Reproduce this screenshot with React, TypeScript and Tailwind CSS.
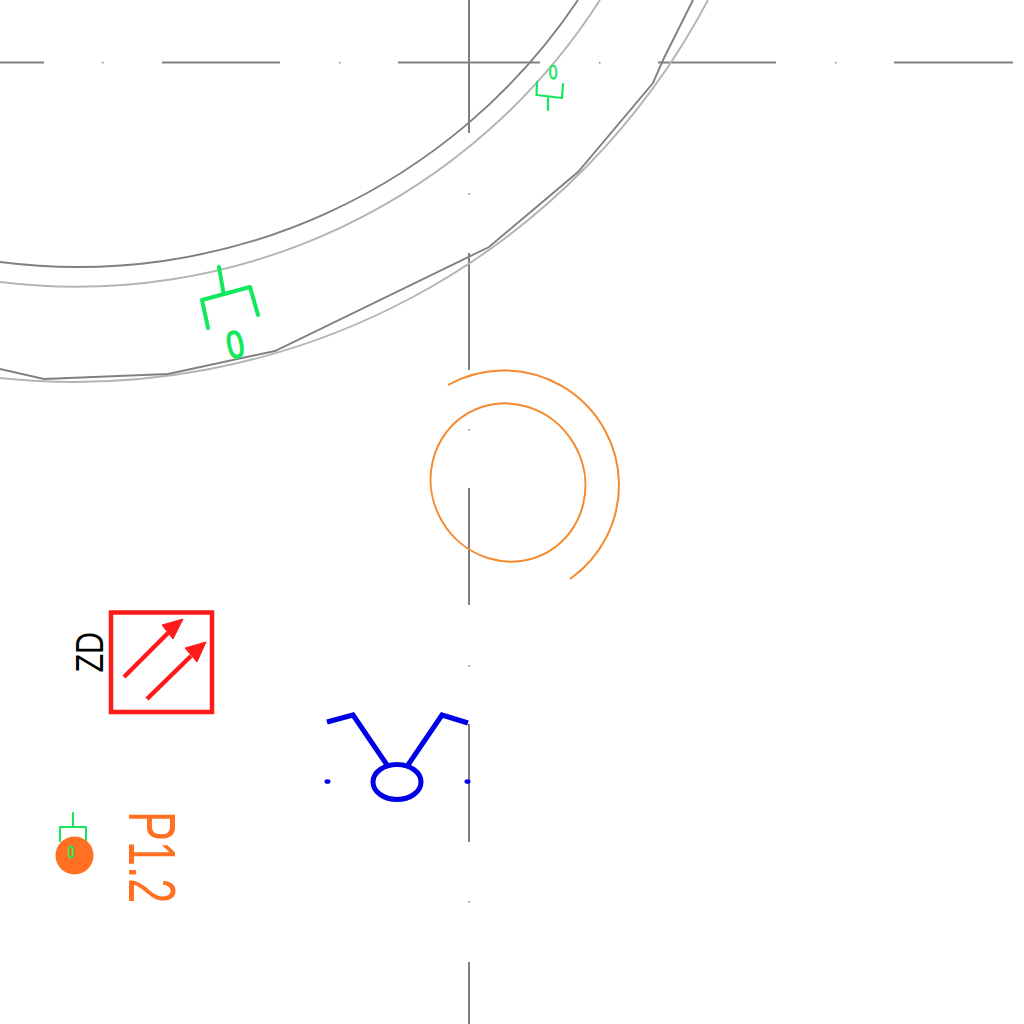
const DARK = "#808080";
const LIGHT = "#b4b4b4";
const GREEN = "#12e85c";
const ORANGE = "#ff7022";
const BLUE = "#0000e6";
const RED = "#ff1a1a";

// centre lines: [from, to] stretches, plus the tiny dots between them
const hSegments = [[0, 44], [162, 280], [398, 540], [658, 776], [894, 1013]];
const hDots = [102, 339, 599, 835];
const vSegments = [[0, 133], [253, 370], [488, 605], [724, 842], [962, 1024]];
const vDots = [193, 429, 665, 901];

function Drawing() {
  return (
    <svg width="1024" height="1024" viewBox="0 0 1024 1024" fill="none" className="block">
      {/* centre lines */}
      <g stroke={DARK} strokeWidth="2">
        {hSegments.map(([a, b]) => (
          <line key={a} x1={a} y1="62.5" x2={b} y2="62.5" />
        ))}
        {vSegments.map(([a, b]) => (
          <line key={a} x1="469" y1={a} x2="469" y2={b} />
        ))}
      </g>
      <g fill="#808080">
        {hDots.map((x) => (
          <rect key={x} x={x} y="62" width="1.500" height="1.500" />
        ))}
        {vDots.map((y) => (
          <rect key={y} x="468.500" y={y} width="1.500" height="1.500" />
        ))}
      </g>

      {/* curved walls */}
      <path d="M0 262 A602 602 0 0 0 578 0" stroke={DARK} strokeWidth="1.900" />
      <path d="M0 282 A622 622 0 0 0 600 0" stroke={LIGHT} strokeWidth="1.900" />
      <path d="M0 378 A716 716 0 0 0 708 0" stroke={LIGHT} strokeWidth="1.900" />
      <polyline
        points="0,369 44,379 168,374 275,351 489,247 578,172 653,83 663,60 693,0"
        stroke={DARK}
        strokeWidth="1.900"
      />

      {/* green marks */}
      <g stroke={GREEN} strokeLinecap="round" strokeLinejoin="round">
        <path d="M219 267 L223.500 293 M208 328 L202 300 L250 287 L258 315" strokeWidth="4" />
        <path d="M548 97 L548 110 M537 82 L536.500 95 L562 98 L563 84" strokeWidth="2.200" />
        <path d="M73 813 L73 827 M60 841 L60 827 L86 827 L86 841" strokeWidth="2" />
      </g>

      {/* orange rings */}
      <g stroke="#f58a2e" strokeWidth="2">
        <ellipse cx="508" cy="482.500" rx="80" ry="76.500" transform="rotate(60 508 482.500)" />
        <path d="M448 385 A115 115 0 0 1 619 484 A115 115 0 0 1 570 579" />
      </g>

      {/* red box with arrows */}
      <rect x="111" y="612.500" width="101" height="99.500" stroke={RED} strokeWidth="4.500" />
      <g stroke={RED} strokeWidth="4.500">
        <line x1="124" y1="677" x2="168" y2="633" />
        <line x1="147" y1="699" x2="191" y2="656" />
      </g>
      <g fill={RED} stroke={RED} strokeWidth="1" strokeLinejoin="round">
        <polygon points="183,619 162,625 173,639" />
        <polygon points="206,642 185,648 197,662" />
      </g>

      {/* blue fitting */}
      <g stroke={BLUE} strokeWidth="5">
        <polyline points="327,722 353,715 387,765" />
        <polyline points="408,765 442,715 468,723" />
        <ellipse cx="397" cy="782" rx="24" ry="17.500" />
      </g>
      <ellipse cx="327.500" cy="781.500" rx="3" ry="2.300" fill={BLUE} />
      <ellipse cx="467.500" cy="781.500" rx="3" ry="2.300" fill={BLUE} />

      {/* orange node */}
      <circle cx="74.500" cy="855.500" r="19" fill={ORANGE} />

      {/* labels */}
      <g className="font-['Liberation_Sans',sans-serif]">
        <text transform="translate(103 672.500) rotate(-90) scale(.78 1)" fontSize="39" className="fill-black">
          ZD
        </text>
        <text transform="translate(129 811) rotate(90) scale(.67 1)" fontSize="67" className="fill-[#ff7022]">
          P1.2
        </text>
        <text
          transform="translate(235 344) rotate(-12) scale(.8 1)"
          y="14"
          textAnchor="middle"
          fontSize="39"
          stroke={GREEN}
          strokeWidth="1.300"
          className="fill-[#12e85c]"
        >
          0
        </text>
        <text
          transform="translate(553 72) rotate(-3) scale(.8 1)"
          y="7"
          textAnchor="middle"
          fontSize="20"
          stroke={GREEN}
          strokeWidth=".5"
          className="fill-[#12e85c]"
        >
          0
        </text>
        <text
          transform="translate(71 852) scale(.7 1)"
          y="6"
          textAnchor="middle"
          fontSize="17"
          stroke={GREEN}
          strokeWidth=".8"
          className="fill-[#12e85c]"
        >
          0
        </text>
      </g>
    </svg>
  );
}

export default function App() {
  return (
    <div className="h-[1024px] w-[1024px] overflow-hidden bg-white">
      <Drawing />
    </div>
  );
}
